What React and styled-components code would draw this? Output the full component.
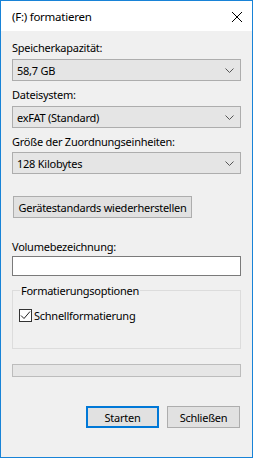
import React from "react";
import styled, { createGlobalStyle } from "styled-components";

const Global = createGlobalStyle`
  html, body { margin: 0; padding: 0; background: #f0f0f0; }
  * { box-sizing: border-box; }
  body {
    font-family: "Noto Sans", "Segoe UI", sans-serif;
    font-size: 11px;
    letter-spacing: -0.25px;
    color: #000;
  }
`;

const Window = styled.div`
  width: 253px;
  height: 458px;
  border: 1px solid #1883d7;
  display: flex;
  flex-direction: column;
  background: #f0f0f0;
`;

const TitleBar = styled.div`
  height: 30px;
  flex: none;
  background: #fff;
  display: flex;
  align-items: center;
  justify-content: space-between;
  padding: 0 10px 0 11px;
  line-height: 15px;
  font-size: 11.5px;
`;

const CloseButton = styled.div`
  width: 10px;
  height: 10px;
  display: flex;
  margin-top: 1px;
`;

const Body = styled.div`
  flex: 1;
  display: flex;
  flex-direction: column;
  padding: 0 11px;
`;

const Label = styled.div`
  line-height: 15px;
  margin-top: ${(p) => p.$mt || 0}px;
  white-space: nowrap;
`;

const Combo = styled.div`
  height: 22px;
  margin-top: ${(p) => p.$mt || 4}px;
  border: 1px solid #adadad;
  background: #e5e5e5;
  display: flex;
  align-items: center;
  justify-content: space-between;
  padding: 0 4px 0 4px;
  line-height: 15px;
`;

const Chevron = styled.svg`
  width: 9px;
  height: 5px;
  margin-right: 2px;
`;

const PushButton = styled.div`
  height: 22px;
  width: ${(p) => p.$w}px;
  margin-top: ${(p) => p.$mt || 0}px;
  margin-left: ${(p) => p.$ml || 0}px;
  border: ${(p) => (p.$default ? "2px solid #0078d7" : "1px solid #adadad")};
  background: #e1e1e1;
  display: flex;
  align-items: center;
  justify-content: center;
  line-height: 15px;
  white-space: nowrap;
`;

const TextBox = styled.div`
  height: 20px;
  margin-top: 2px;
  border: 1px solid #7a7a7a;
  background: #fff;
`;

const Group = styled.fieldset`
  margin: 7px 0 0 0;
  padding: 10px 6px 25px 6px;
  border: 1px solid #dcdcdc;
  min-width: 0;
`;

const Legend = styled.legend`
  padding: 0 1px;
  margin-left: 1px;
  line-height: 15px;
`;

const CheckRow = styled.div`
  display: flex;
  align-items: center;
  gap: 2px;
  line-height: 15px;
`;

const CheckBox = styled.div`
  width: 13px;
  height: 13px;
  border: 1px solid #333;
  background: #fff;
  display: flex;
  align-items: center;
  justify-content: center;
`;

const Progress = styled.div`
  height: 13px;
  margin-top: 15px;
  border: 1px solid #bcbcbc;
  background: #e6e6e6;
`;

const ButtonRow = styled.div`
  display: flex;
  justify-content: flex-end;
  gap: 8px;
  margin-top: 29px;
  padding-right: 1px;
`;

function ComboBox({ value, mt }) {
  return (
    <Combo $mt={mt}>
      <span>{value}</span>
      <Chevron viewBox="0 0 9 5">
        <path d="M0.5 0.5 L4.5 4.5 L8.5 0.5" fill="none" stroke="#555" strokeWidth="1" />
      </Chevron>
    </Combo>
  );
}

export default function App() {
  return (
    <>
      <Global />
      <Window>
        <TitleBar>
          <span>(F:) formatieren</span>
          <CloseButton>
            <svg width="10" height="10" viewBox="0 0 10 10">
              <path d="M0 0 L10 10 M10 0 L0 10" stroke="#000" strokeWidth="1" />
            </svg>
          </CloseButton>
        </TitleBar>
        <Body>
          <Label $mt={9}>Speicherkapazität:</Label>
          <ComboBox value="58,7 GB" />
          <Label $mt={6}>Dateisystem:</Label>
          <ComboBox value="exFAT (Standard)" />
          <Label $mt={6}>Größe der Zuordnungseinheiten:</Label>
          <ComboBox value="128 Kilobytes" mt={3} />
          <PushButton $w={179} $mt={22} $ml={1}>
            Gerätestandards wiederherstellen
          </PushButton>
          <Label $mt={21}>Volumebezeichnung:</Label>
          <TextBox />
          <Group>
            <Legend>Formatierungsoptionen</Legend>
            <CheckRow>
              <CheckBox>
                <svg width="11" height="11" viewBox="0 0 11 11">
                  <path d="M1 5.5 L4 8.5 L10 1.5" fill="none" stroke="#222" strokeWidth="1" />
                </svg>
              </CheckBox>
              <span>Schnellformatierung</span>
            </CheckRow>
          </Group>
          <Progress />
          <ButtonRow>
            <PushButton $w={73} $default>Starten</PushButton>
            <PushButton $w={73}>Schließen</PushButton>
          </ButtonRow>
        </Body>
      </Window>
    </>
  );
}
